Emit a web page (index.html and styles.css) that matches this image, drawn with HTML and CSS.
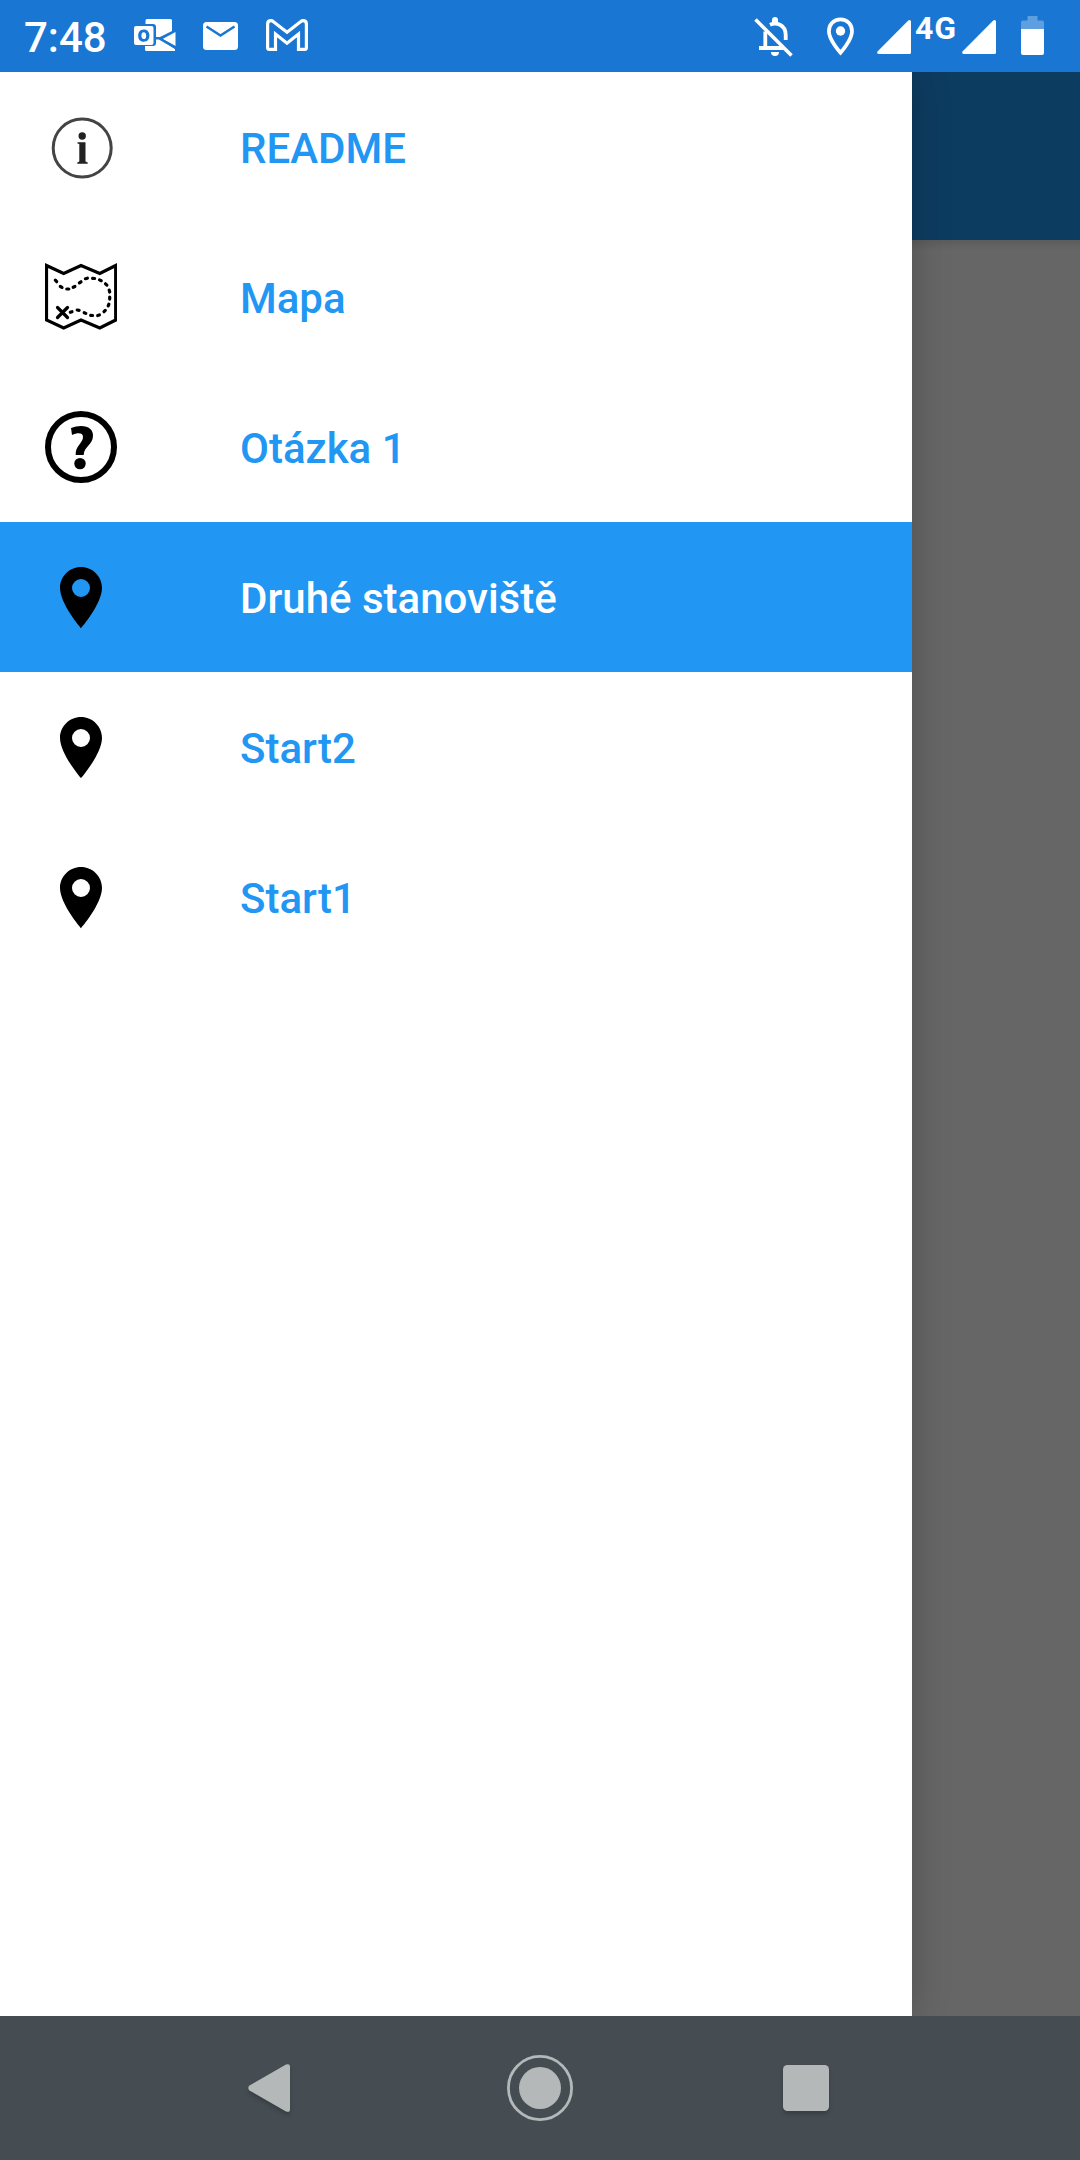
FILE: index.html
```html
<!DOCTYPE html>
<html lang="cs">
<head>
<meta charset="utf-8">
<title>Mapa</title>
<link rel="stylesheet" href="styles.css">
</head>
<body>
<svg class="symbols" aria-hidden="true">
  <symbol id="place" viewBox="0 0 24 24">
    <path fill-rule="evenodd" d="M12 2C8.13 2 5 5.13 5 9c0 5.250 7 13.400 7 13.400S19 14.250 19 9c0-3.870-3.130-7-7-7zM12 6a3 3 0 1 1 0 6a3 3 0 0 1 0-6z"/>
  </symbol>
  <symbol id="signal" viewBox="0 0 34 34">
    <path d="M32.500 0Q34 0 34 1.500V32.500Q34 34 32.500 34H1.500Q-.5 33.500 .5 31.500L31 .8Q31.700 0 32.500 0z"/>
  </symbol>
</svg>
<div class="screen">
  <header class="status">
    <div class="status-group">
      <span class="clock">7:48</span>
      <svg class="outlook" viewBox="134 19 42 32">
        <path d="M147 19H170.500Q172 19 172 20.500V31L158 38L175 49V51H146.500Q145 51 145 49.500V46H153Q156 46 156 43V27Q156 24 153 24H145.500V20.500Q145.500 19 147 19z"/>
        <path d="M162.500 39L175.500 32V46z"/>
        <path fill-rule="evenodd" d="M136 26H151.500Q153.500 26 153.500 28V43Q153.500 45 151.500 45H136Q134 45 134 43V28Q134 26 136 26zM143.800 29.500C140 29.500 138.200 32.300 138.200 35.700S140 41.800 143.800 41.800S149.400 39 149.400 35.600S147.500 29.500 143.800 29.500zM143.800 32.300C145.400 32.300 146.200 33.600 146.200 35.700S145.400 39.100 143.800 39.100S141.400 37.700 141.400 35.600S142.200 32.300 143.800 32.300z"/>
        <path class="gap" d="M155 38.200H159L176 48"/>
      </svg>
      <svg class="mail" viewBox="0 0 35 28">
        <rect width="35" height="28" rx="3.500"/>
        <path class="gap" d="M3.500 4.500L17.500 13.500L31.500 4.500"/>
      </svg>
      <svg class="gmail" viewBox="0 0 42 32">
        <path d="M1.600 5Q1.600 1.600 5 1.600Q6.200 1.600 7.500 2.700L21 13.200L34.500 2.700Q35.800 1.600 37 1.600Q40.400 1.600 40.400 5V28.500Q40.400 30.400 38.500 30.400H32.500V15L21 24.300L9.500 15V30.400H3.500Q1.600 30.400 1.600 28.500z"/>
      </svg>
    </div>
    <div class="status-group">
      <svg class="bell" viewBox="754 17 40 40">
        <path class="line" d="M770 24.800Q775 22.600 780 24.800Q785.700 27.800 785.700 35V40M765.300 31.500V48M759 48H784"/>
        <path d="M772 24V20Q772 17 775 17T778 20V24zM771 52H779Q779 56 775 56T771 52z"/>
        <path class="line slash" d="M755.500 19.500L791.500 55.500"/>
      </svg>
      <svg class="pin" viewBox="827 17 27 39">
        <path class="line" d="M840.500 19.300C833.700 19.300 828.900 24.700 828.900 31.200C828.900 40 840.500 52.700 840.500 52.700S852 40 852 31.200C852 24.700 847.300 19.300 840.500 19.300z"/>
        <circle cx="840.500" cy="31" r="4.700"/>
      </svg>
      <svg class="signal"><use href="#signal"/></svg>
      <span class="network">4G</span>
      <svg class="signal"><use href="#signal"/></svg>
      <svg class="battery" viewBox="0 0 23 39">
        <path class="empty" d="M6.500 0H16.500V4.500H21Q23 4.500 23 6.500V13H0V6.500Q0 4.500 2 4.500H6.500z"/>
        <path d="M0 13H23V37Q23 39 21 39H2Q0 39 0 37z"/>
      </svg>
    </div>
  </header>

  <main class="content">
    <nav class="drawer">
      <a class="item">
        <svg class="icon" viewBox="45 111 72 72">
          <circle class="info-ring" cx="82.200" cy="148" r="29"/>
          <circle class="info-mark" cx="82.200" cy="136" r="3.700"/>
          <path class="info-mark" d="M77.500 142.300H85.500V161.500L87.700 162.500V163.700H77.300V162.500L79.300 161.500V144L77.500 143.400z"/>
        </svg>
        <span class="label">README</span>
      </a>
      <a class="item">
        <svg class="icon map" viewBox="45 261 72 72">
          <path d="M46.500 265.500L63.700 273.500L81 265.500L99.800 273.500L115.700 265.500V320L99.800 328L81 320L63.700 328L46.500 320z"/>
          <path class="dots" d="M55.300 280.200L56.700 281.700M60.300 286.500L62 287.400M66.800 289H68.800M73.200 287.300L74.900 286.500M79.400 282.800L81 281.800M85.400 278.700L87.400 278.200M92.600 278.300L94.600 278.500M99.500 279.900L101.200 280.700M105.500 283.800L106.900 285.100M109.200 290.100L109.700 292M109.700 297.100V299.100M108.900 304.200L108.200 305.900M105.300 310.400L104 311.700M99.400 315L97.700 315.500M92.600 315.500L90.700 315.300M85.800 313.400L84.200 312.700M79.100 310.300L77.200 310M72 311.700L70.300 312.300"/>
          <path class="cross" d="M57.500 307.500L67.500 317.500M67.500 307.500L57.500 317.500"/>
        </svg>
        <span class="label">Mapa</span>
      </a>
      <a class="item">
        <svg class="icon" viewBox="45 411 72 72">
          <circle class="help-ring" cx="81" cy="447" r="33"/>
          <path d="M71 428Q76 426 81 426C89 426 93 430 93 435.500C93 445 84 446 83.700 455H75.700C75 446 83 443 83 437C83 432.500 77.500 432.500 72 435z"/>
          <circle cx="80" cy="463.600" r="5.700"/>
        </svg>
        <span class="label">Otázka 1</span>
      </a>
      <a class="item active">
        <svg class="icon"><use href="#place"/></svg>
        <span class="label">Druhé stanoviště</span>
      </a>
      <a class="item">
        <svg class="icon"><use href="#place"/></svg>
        <span class="label">Start2</span>
      </a>
      <a class="item">
        <svg class="icon"><use href="#place"/></svg>
        <span class="label">Start1</span>
      </a>
    </nav>
    <div class="scrim">
      <div class="appbar"></div>
      <div class="page"></div>
    </div>
  </main>

  <footer class="navbar">
    <svg class="back" viewBox="0 0 42 48"><path d="M38 .6Q42 -1 42 3V45Q42 49 38 47.400L1.500 26.500Q-1 24 1.500 21.500z"/></svg>
    <svg class="home" viewBox="0 0 66 66"><circle class="home-ring" cx="33" cy="33" r="31.600"/><circle cx="33" cy="33" r="21"/></svg>
    <svg class="recent" viewBox="0 0 46 46"><rect width="46" height="46" rx="4.500"/></svg>
  </footer>
</div>
</body>
</html>
```
FILE: styles.css
```css
body {
  margin: 0;
  font-family: Roboto, "Noto Sans", sans-serif;
}

svg {
  display: block;
  flex: none;
}

.symbols {
  position: absolute;
  width: 0;
  height: 0;
}

.screen {
  display: flex;
  flex-direction: column;
  width: 1080px;
  height: 2160px;
  overflow: hidden;
}

/* Status bar */
.status {
  display: flex;
  justify-content: space-between;
  height: 72px;
  padding: 0 36px 0 24px;
  color: #fff;
  background: #1976d2;
}

.status svg {
  fill: #fff;
}

.status-group {
  display: flex;
  align-items: flex-start;
}

.clock {
  width: 110px;
  font-size: 42px;
  font-weight: 500;
  line-height: 76px;
  white-space: nowrap;
}

.gap {
  fill: none;
  stroke: #1976d2;
  stroke-width: 2.500;
}

.outlook {
  width: 42px;
  height: 32px;
  margin-top: 19px;
}

.mail {
  width: 35px;
  height: 28px;
  margin: 22px 0 0 27px;
}

.status .gmail {
  width: 42px;
  height: 32px;
  margin: 19px 0 0 28px;
  fill: none;
  stroke: #fff;
  stroke-width: 3.200;
}

.line {
  fill: none;
  stroke: #fff;
  stroke-width: 3.800;
}

.slash {
  stroke-width: 3.500;
}

.bell {
  width: 40px;
  height: 40px;
  margin: 17px 33px 0 0;
}

.pin {
  width: 27px;
  height: 39px;
  margin: 17px 23px 0 0;
}

.signal {
  width: 34px;
  height: 34px;
  margin-top: 20px;
}

.network {
  width: 47px;
  margin-left: 4px;
  font-size: 32px;
  font-weight: 700;
  letter-spacing: 1px;
  line-height: 57px;
}

.battery {
  width: 23px;
  height: 39px;
  margin: 16px 0 0 25px;
}

.empty {
  opacity: 0.3;
}

/* Drawer over the dimmed page */
.content {
  display: flex;
  flex: 1;
}

.drawer {
  z-index: 1;
  width: 912px;
  background: #fff;
  box-shadow: 0 0 36px rgba(0, 0, 0, 0.22);
  clip-path: inset(0 -60px 0 0);
}

.item {
  display: flex;
  align-items: center;
  gap: 123px;
  height: 150px;
  padding-left: 45px;
  color: #2196f3;
  font-size: 42px;
  font-weight: 500;
}

.label {
  padding-top: 2px;
}

.item.active {
  color: #fff;
  background: #2196f3;
}

.icon {
  width: 72px;
  height: 72px;
  fill: #000;
}

.info-ring {
  fill: none;
  stroke: #444;
  stroke-width: 3;
}

.info-mark {
  fill: #222;
}

.map {
  fill: none;
  stroke: #000;
  stroke-width: 3.200;
}

.dots,
.cross {
  stroke-linecap: round;
}

.help-ring {
  fill: none;
  stroke: #000;
  stroke-width: 6;
}

.scrim {
  display: flex;
  flex: 1;
  flex-direction: column;
}

.appbar {
  height: 168px;
  background: #0d3c61;
}

.page {
  flex: 1;
  background: linear-gradient(#5c5c5c, #666 10px);
}

/* System navigation */
.navbar {
  display: flex;
  align-items: center;
  height: 144px;
  padding-left: 248px;
  background: #454d53;
}

.navbar svg {
  fill: #b4b8b9;
}

.back {
  width: 42px;
  height: 48px;
  filter: drop-shadow(0 3px 2px rgba(0, 0, 0, 0.2));
}

.home {
  width: 66px;
  height: 66px;
  margin: 0 210px 0 217px;
}

.navbar .home-ring {
  fill: none;
  stroke: #b4b8b9;
  stroke-width: 2.800;
}

.recent {
  width: 46px;
  height: 46px;
  filter: drop-shadow(0 3px 2px rgba(0, 0, 0, 0.2));
}
```
